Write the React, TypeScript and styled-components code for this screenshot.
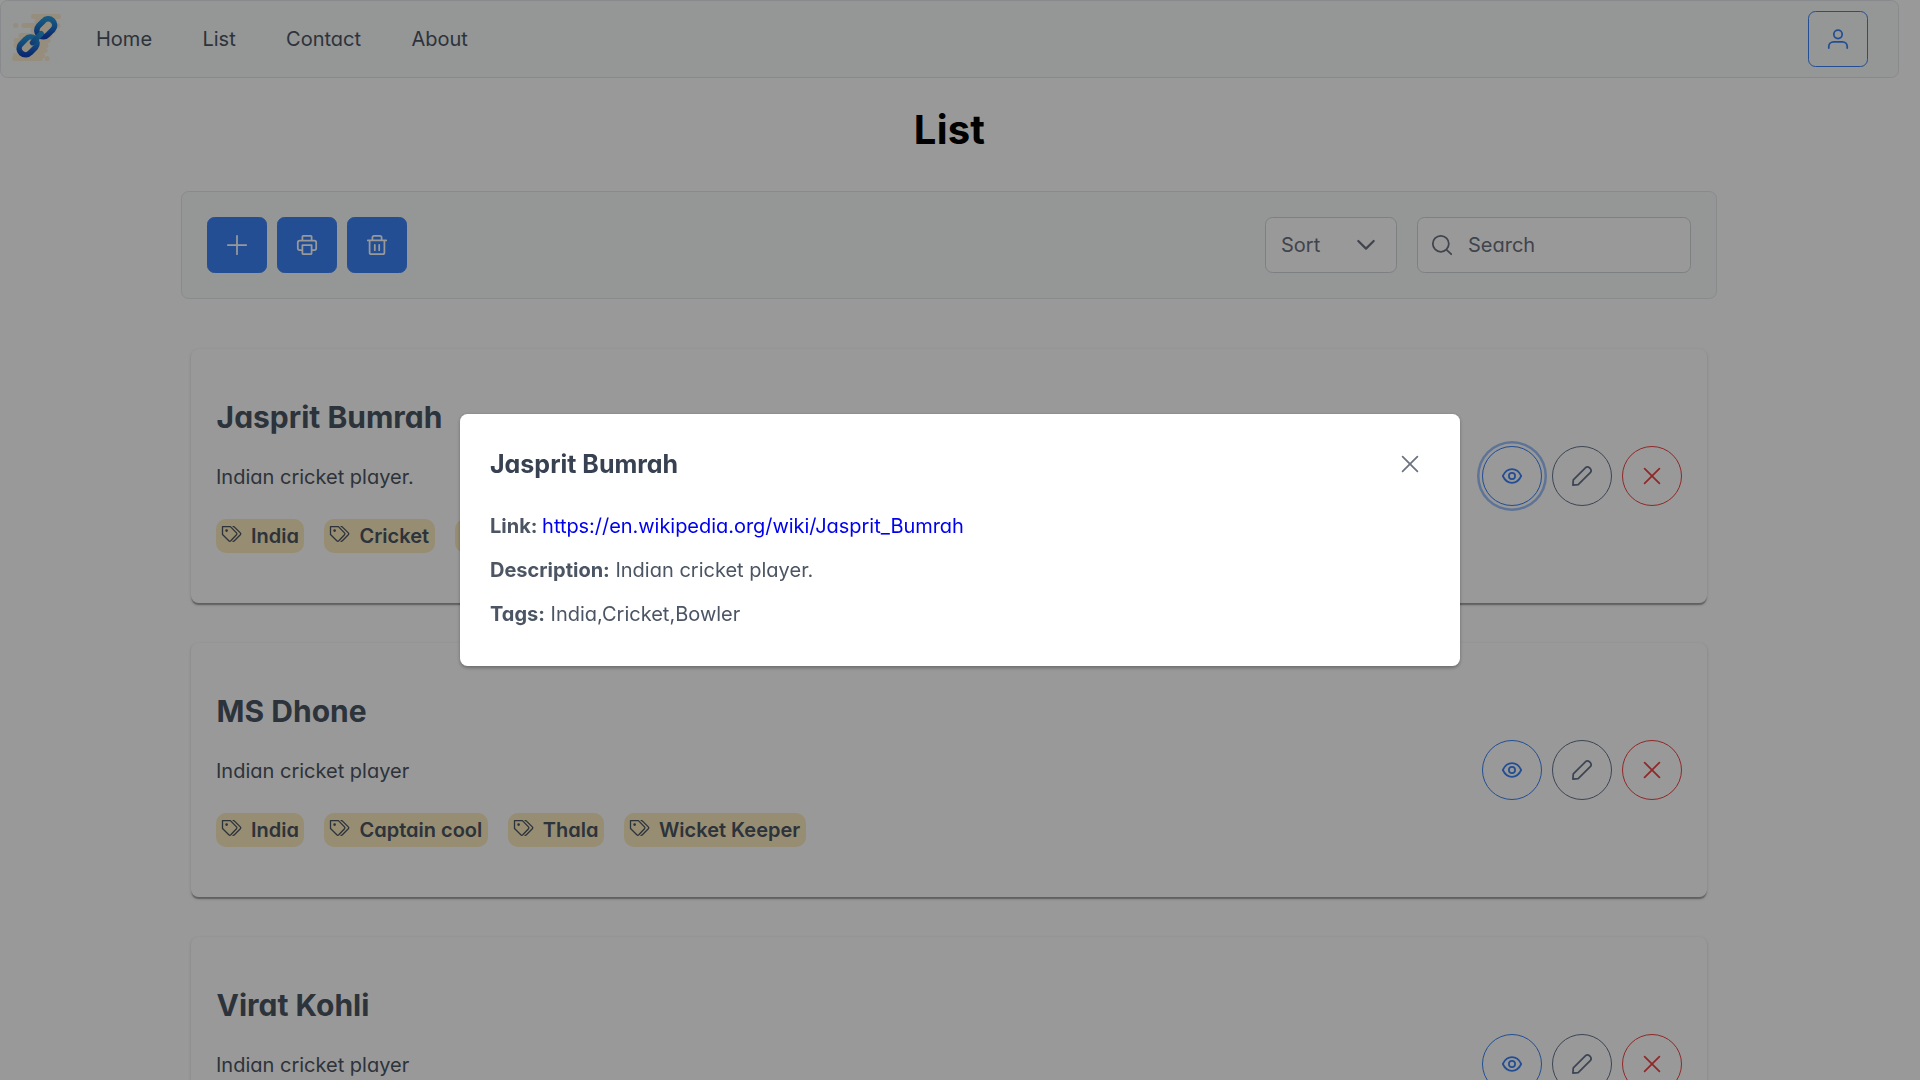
import React from 'react';
import styled, { createGlobalStyle } from 'styled-components';

const GlobalStyle = createGlobalStyle`
  * { box-sizing: border-box; }
  body {
    margin: 0;
    height: 1080px;
    overflow: hidden;
    background: #fff;
    color: #4b5563;
    font-family: Inter, "Liberation Sans", sans-serif;
    font-size: 20px;
    font-feature-settings: "cv02", "cv03", "cv04", "cv11";
  }
  h1, h2, p { margin: 0; }
  button { font: inherit; cursor: pointer; }
`;

const Page = styled.div`
  width: 1899px;
  height: 1080px;
  overflow: hidden;
`;

const Navbar = styled.nav`
  display: flex;
  align-items: center;
  height: 78px;
  padding: 0 30px 0 11px;
  background: #f9fafb;
  border: 1px solid #e5e7eb;
  border-radius: 7.5px;
`;

const Menu = styled.div`
  display: flex;
  flex: 1;
  gap: 0.4px;
  margin-left: 9px;
`;

const MenuItem = styled.a`
  padding: 15px 25px;
  line-height: 24px;
  color: #4b5563;
`;

const Button = styled.button<{ $color: string; $solid?: boolean; $round?: boolean; $focus?: boolean }>`
  display: flex;
  align-items: center;
  justify-content: center;
  width: 60px;
  height: ${p => (p.$round ? 60 : 56)}px;
  padding: 0 0 0 0.5px;
  color: ${p => (p.$solid ? '#fff' : p.$color)};
  background: ${p => (p.$solid ? p.$color : 'transparent')};
  border: 1px solid ${p => p.$color};
  border-radius: ${p => (p.$round ? '50%' : '7.5px')};
  box-shadow: ${p => (p.$focus ? '0 0 0 2.5px #fff, 0 0 0 5px #9dc1fb' : 'none')};
`;

const Title = styled.h1`
  margin: 27px 0 37px;
  line-height: 49px;
  font-size: 40px;
  font-weight: 700;
  letter-spacing: 0.2px;
  text-align: center;
  color: #000;
`;

const Toolbar = styled.div`
  display: flex;
  justify-content: space-between;
  width: 1536px;
  height: 108px;
  margin: 0 0 0 181px;
  padding: 25px;
  background: #f9fafb;
  border: 1px solid #e5e7eb;
  border-radius: 7.5px;
`;

const Group = styled.div<{ $gap: number }>`
  display: flex;
  gap: ${p => p.$gap}px;
`;

const Field = styled.div<{ $width: number }>`
  display: flex;
  align-items: center;
  width: ${p => p.$width}px;
  height: 56px;
  padding: 0 14px;
  color: #6b7280;
  background: #fff;
  border: 1px solid #d1d5db;
  border-radius: 7.5px;
`;

const SortField = styled(Field)`
  justify-content: space-between;
  padding: 0 20px 0 15px;
`;

const SearchField = styled(Field)`
  gap: 16px;
`;

const Cards = styled.main`
  display: flex;
  flex-direction: column;
  gap: 40px;
  width: 1516px;
  margin: 50px 0 0 191px;
`;

const Card = styled.article`
  display: flex;
  align-items: center;
  justify-content: space-between;
  height: 254px;
  padding: 0 25px;
  background: #fff;
  border-radius: 7.5px;
  box-shadow: 0 2.5px 1.25px -1.25px rgba(0, 0, 0, 0.2), 0 1.25px 1.25px 0 rgba(0, 0, 0, 0.14),
    0 1.25px 3.75px 0 rgba(0, 0, 0, 0.12);
`;

const CardTitle = styled.h2`
  padding-left: 0.6px;
  line-height: 36px;
  font-size: 30px;
  font-weight: 700;
`;

const CardText = styled.p`
  margin: 30px 0;
  line-height: 24px;
`;

const Tag = styled.span`
  display: flex;
  gap: 9px;
  height: 34px;
  padding: 5px 5.5px 5px 5px;
  line-height: 24px;
  font-weight: 600;
  background: #faebbe;
  border-radius: 10px;
`;

const Overlay = styled.div`
  position: fixed;
  inset: 0;
  display: flex;
  align-items: center;
  justify-content: center;
  background: rgba(0, 0, 0, 0.4);
`;

const Dialog = styled.section`
  width: 1000px;
  height: 252px;
  padding: 30px;
  background: #fff;
  border-radius: 7.5px;
  box-shadow: 0 1.25px 3.75px rgba(0, 0, 0, 0.3);
`;

const DialogHeader = styled.header`
  display: flex;
  align-items: center;
  justify-content: space-between;
  height: 40px;
  margin-bottom: 30px;
`;

const DialogTitle = styled.h2`
  font-size: 25px;
  font-weight: 700;
  color: #374151;
`;

const CloseButton = styled.button`
  display: flex;
  align-items: center;
  justify-content: center;
  width: 40px;
  height: 40px;
  padding: 0;
  color: #6b7280;
  background: transparent;
  border: 0;
`;

const Details = styled.div`
  display: flex;
  flex-direction: column;
  gap: 20px;
  line-height: 24px;
`;

const Link = styled.a`
  margin-left: -1px;
  letter-spacing: -0.04px;
  color: #0000ee;
`;

const ICONS = {
  user: 'M10 1.1a4.2 4.2 0 1 1 0 8.4a4.2 4.2 0 0 1 0-8.4zM.8 19v-1.6c0-2.6 2.2-4.5 4.8-4.5h8.8c2.6 0 4.8 1.9 4.8 4.5V19',
  plus: 'M10 .8v18.4M.8 10h18.4',
  print:
    'M5.4 5.6V1.6q0-.8.8-.8h7.6q.8 0 .8.8v4M5.4 15H2.6Q.8 15 .8 13.2V7.6Q.8 5.6 2.8 5.6h14.4q2 0 2 2v5.6q0 1.8-1.8 1.8h-2.8M5.4 10h9.2v8.2q0 1-1 1H6.4q-1 0-1-1z',
  trash: 'M.8 5.4h18.4M5.4 5.2V2.6Q5.4.8 7.2.8h5.6q1.8 0 1.8 1.8v2.6M2.6 5.6v11.8q0 1.8 1.8 1.8h11.2q1.8 0 1.8-1.8V5.6M7.8 9.8v5.4M12.2 9.8v5.4',
  down: 'M2.3 6L10 13.6L17.7 6',
  search: 'M8.8.8a8 8 0 1 1 0 16a8 8 0 0 1 0-16zM14.6 14.8l4.6 4.4',
  eye: 'M.8 10C3 5.4 6.3 3.2 10 3.2S17 5.4 19.2 10C17 14.6 13.7 16.8 10 16.8S3 14.6.8 10zM10 6.9a3.1 3.1 0 1 1 0 6.2a3.1 3.1 0 0 1 0-6.2z',
  pencil: 'M.9 19.1l.4-5.2L13.6 1.7q1.7-1.6 3.9.1l.9.9q1.5 1.9.1 3.7L6.2 18.6z',
  times: 'M2.6 2.6L17.4 17.4M17.4 2.6L2.6 17.4',
};

type IconProps = { name: keyof typeof ICONS; size?: number; weight?: number };

function Icon({ name, size = 20, weight = 1.75 }: IconProps) {
  return (
    <svg width={size} height={size} viewBox="0 0 20 20" overflow="visible" fill="none" stroke="currentColor" strokeWidth={weight} strokeLinecap="round" strokeLinejoin="round">
      <path d={ICONS[name]} />
    </svg>
  );
}

function TagsIcon() {
  return (
    <svg width="21" height="20" viewBox="0 0 21 20" fill="none" stroke="currentColor" strokeWidth="1.3" strokeLinejoin="round" strokeLinecap="round">
      <path d="M1.5 2.6H9.4L15.5 8.9q.9.9 0 1.9L9.8 16.8q-1 .9-2 0L1.5 10.5z" />
      <path d="M12.1 2.6h.9L19.3 8.9q.9.9 0 1.9L13.4 16.8q-.6.6-1.4.5" />
      <circle cx="5.6" cy="6.6" r=".7" fill="currentColor" />
    </svg>
  );
}

function Logo() {
  return (
    <svg width="50" height="50" viewBox="0 0 50 50" fill="none">
      <defs>
        <linearGradient id="chain" x1="0" y1="0" x2="0" y2="1">
          <stop offset="0" stopColor="#2795d8" />
          <stop offset=".5" stopColor="#1d73cd" />
          <stop offset="1" stopColor="#1345bd" />
        </linearGradient>
        <linearGradient id="joint" x1="19" y1="28" x2="29" y2="19" gradientUnits="userSpaceOnUse">
          <stop offset="0" stopColor="#1c68c4" />
          <stop offset="1" stopColor="#2896d4" />
        </linearGradient>
      </defs>
      <path
        d="M21.5 2.5h25M25 7.5h17M3.7 11.5h.1M12 11.5h34M21 16.5h21M9 21.5h29M4 26.5h32M4 31.5h30M7 36.5h25M3.5 41.5h27M2.5 44.5h26M35 44.5h.1M33 36.5h.1"
        stroke="#fae3b5"
        strokeOpacity=".6"
        strokeWidth="5"
        strokeLinecap="round"
      />
      <g transform="translate(.7 1.7)">
        <path d="M25.7 10.4L30.8 5.3A5.7 5.7 0 0 1 40.3 13.8L35.2 18.9A5.7 5.7 0 0 1 25.7 10.4z" stroke="url(#chain)" strokeWidth="5.6" />
        <path d="M8.1 28.5L13.2 23.4A5.7 5.7 0 0 1 22.7 31.9L17.6 37A5.7 5.7 0 0 1 8.1 28.5z" stroke="url(#chain)" strokeWidth="5.6" />
        <path d="M19.8 27L28.5 18" stroke="url(#joint)" strokeWidth="5.4" strokeLinecap="round" />
      </g>
    </svg>
  );
}

const BLUE = '#3b82f6';

const PLAYERS = [
  { name: 'Jasprit Bumrah', text: 'Indian cricket player.', tags: ['India', 'Cricket', 'Bowler'] },
  { name: 'MS Dhone', text: 'Indian cricket player', tags: ['India', 'Captain cool', 'Thala', 'Wicket Keeper'] },
  { name: 'Virat Kohli', text: 'Indian cricket player', tags: ['India', 'Cricket'] },
];

export default function App() {
  return (
    <>
      <GlobalStyle />
      <Page>
        <Navbar>
          <Logo />
          <Menu>
            {['Home', 'List', 'Contact', 'About'].map(item => (
              <MenuItem key={item}>{item}</MenuItem>
            ))}
          </Menu>
          <Button $color={BLUE}><Icon name="user" /></Button>
        </Navbar>
        <Title>List</Title>
        <Toolbar>
          <Group $gap={10}>
            <Button $color={BLUE} $solid><Icon name="plus" /></Button>
            <Button $color={BLUE} $solid><Icon name="print" /></Button>
            <Button $color={BLUE} $solid><Icon name="trash" /></Button>
          </Group>
          <Group $gap={20}>
            <SortField $width={132}>Sort<Icon name="down" weight={2.2} /></SortField>
            <SearchField $width={274}><Icon name="search" />Search</SearchField>
          </Group>
        </Toolbar>
        <Cards>
          {PLAYERS.map((player, i) => (
            <Card key={player.name}>
              <div>
                <CardTitle>{player.name}</CardTitle>
                <CardText>{player.text}</CardText>
                <Group $gap={20}>
                  {player.tags.map(tag => (
                    <Tag key={tag}><TagsIcon />{tag}</Tag>
                  ))}
                </Group>
              </div>
              <Group $gap={10}>
                <Button $color={BLUE} $round $focus={i === 0}><Icon name="eye" /></Button>
                <Button $color="#64748b" $round><Icon name="pencil" /></Button>
                <Button $color="#ef4444" $round><Icon name="times" /></Button>
              </Group>
            </Card>
          ))}
        </Cards>
      </Page>
      <Overlay>
        <Dialog>
          <DialogHeader>
            <DialogTitle>Jasprit Bumrah</DialogTitle>
            <CloseButton><Icon name="times" /></CloseButton>
          </DialogHeader>
          <Details>
            <p><b>Link:</b> <Link>https://en.wikipedia.org/wiki/Jasprit_Bumrah</Link></p>
            <p><b>Description:</b> Indian cricket player.</p>
            <p><b>Tags:</b> India,Cricket,Bowler</p>
          </Details>
        </Dialog>
      </Overlay>
    </>
  );
}
